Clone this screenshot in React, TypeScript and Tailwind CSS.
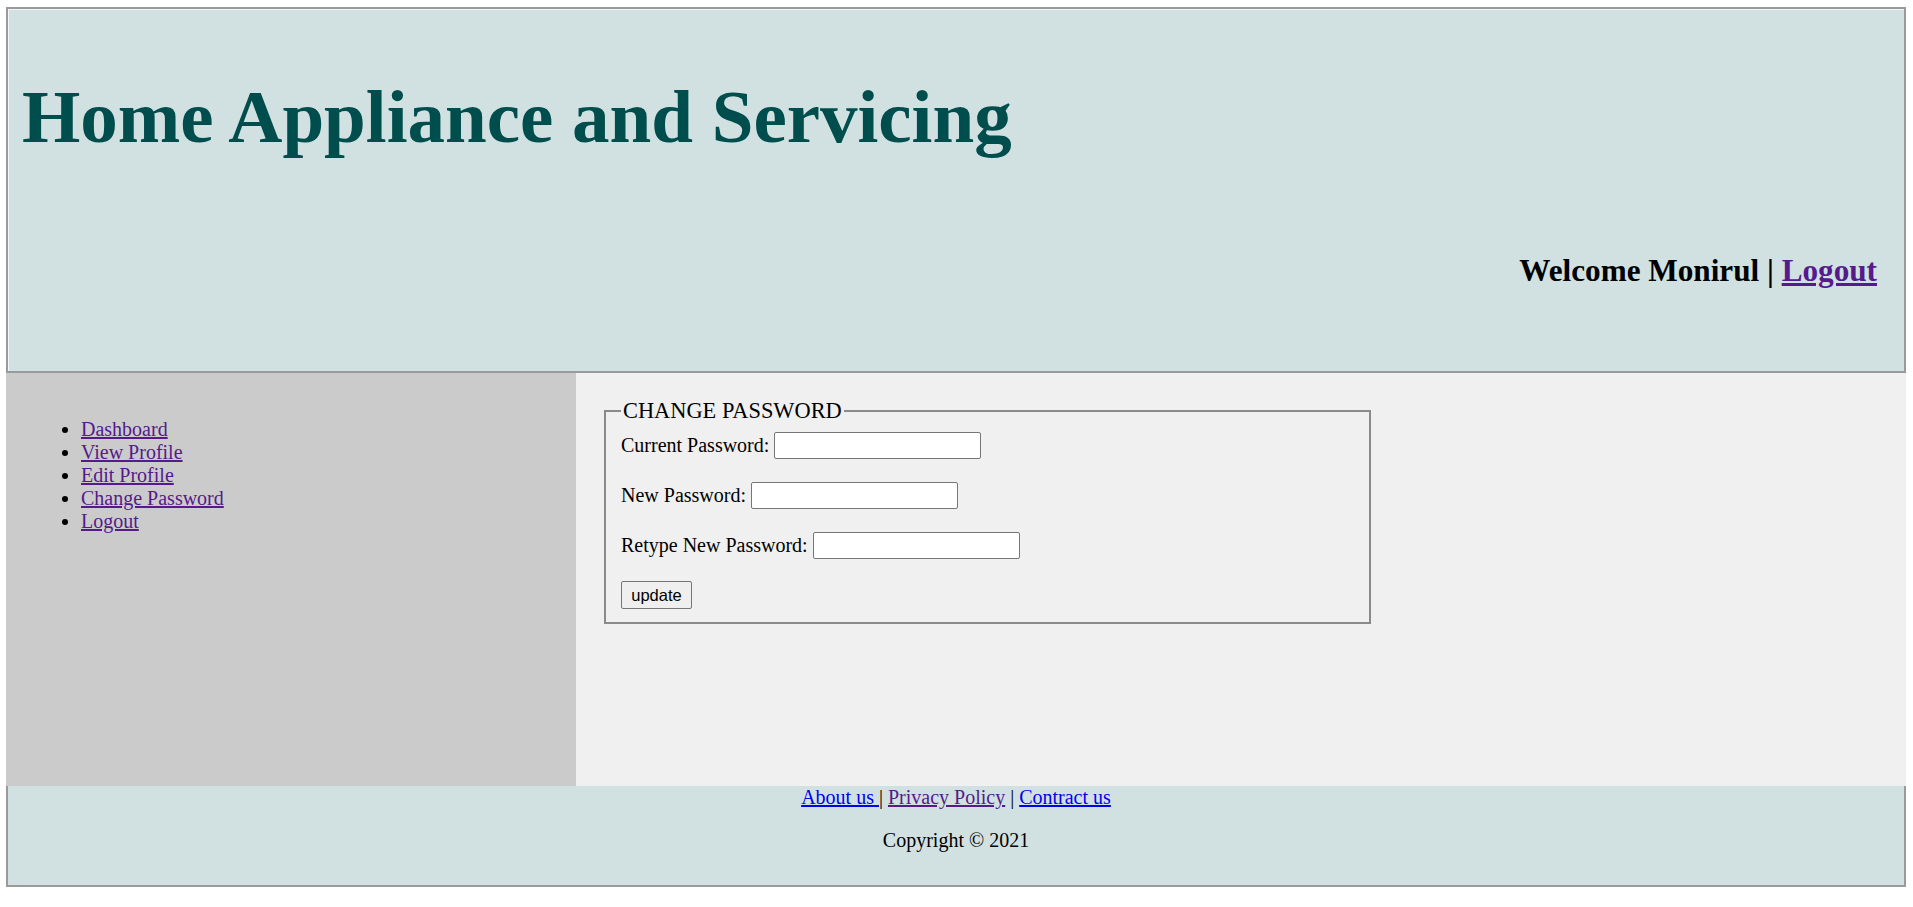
const serif = "font-['Liberation_Serif','Times_New_Roman',serif]"

const sideLinks = ['Dashboard', 'View Profile', 'Edit Profile', 'Change Password', 'Logout']

function Field({ label }: { label: string }) {
  return (
    <div className="flex h-[27px] items-center gap-[5px]">
      <label className="leading-[23px]">{label}</label>
      <input
        type="password"
        className="h-[27px] w-[207px] rounded-[2px] border border-[#767676] bg-white px-1 outline-none"
      />
    </div>
  )
}

export default function App() {
  return (
    <div className={`${serif} min-h-screen bg-white pl-[6px] pt-[7px] text-[20px] text-black`}>
      <div className="w-[1900px]">
        {/* header */}
        <header className="flex h-[366px] flex-col border-2 border-[#9a9a9a] bg-[#d1e0e0] pl-[14px] pr-[27px] shadow-[inset_1px_1px_0_#f2f6f6]">
          <h1 className="mt-[65px] text-[75px] font-bold leading-[86px] text-[#004d4d]">
            Home Appliance and Servicing
          </h1>
          <div className="mt-[93px] text-right text-[31.2px] font-bold leading-[36px]">
            Welcome Monirul |{' '}
            <a href="#" className="text-[#551a8b] underline">
              Logout
            </a>
          </div>
        </header>

        {/* body row */}
        <div className="flex h-[413px]">
          <aside className="w-[570px] bg-[#cbcbcb] pt-[45px]">
            <ul className="list-disc pl-[75px] leading-[23px]">
              {sideLinks.map((l) => (
                <li key={l}>
                  <a href="#" className="text-[#551a8b] underline">
                    {l}
                  </a>
                </li>
              ))}
            </ul>
          </aside>

          <main className="flex-1 bg-[#f0f0f0] pl-[28px] pt-[25px]">
            <fieldset className="w-[767px] border-2 border-[#8a8a8a] px-[15px] pb-[13px] pt-[8px]">
              <legend className="px-[2px] text-[22.4px] leading-[26px]">CHANGE PASSWORD</legend>
              <div className="flex flex-col gap-[23px]">
                <Field label="Current Password:" />
                <Field label="New Password:" />
                <Field label="Retype New Password:" />
              </div>
              <div className="mt-[20px]">
                <button className="h-[28px] w-[71px] rounded-[2px] border border-[#767676] bg-[#efefef] font-['Liberation_Sans',Arial,sans-serif] text-[16.5px]">
                  update
                </button>
              </div>
            </fieldset>
          </main>
        </div>

        {/* footer */}
        <footer className="h-[101px] border-x-2 border-b-2 border-[#9a9a9a] bg-[#d1e0e0] text-center">
          <div className="leading-[23px]">
            <a href="#" className="text-[#0000ee] underline">
              About us{' '}
            </a>
            |{' '}
            <a href="#" className="text-[#551a8b] underline">
              Privacy Policy
            </a>{' '}
            |{' '}
            <a href="#" className="text-[#0000ee] underline">
              Contract us
            </a>
          </div>
          <p className="mt-[20px] leading-[23px]">Copyright © 2021</p>
        </footer>
      </div>
    </div>
  )
}
